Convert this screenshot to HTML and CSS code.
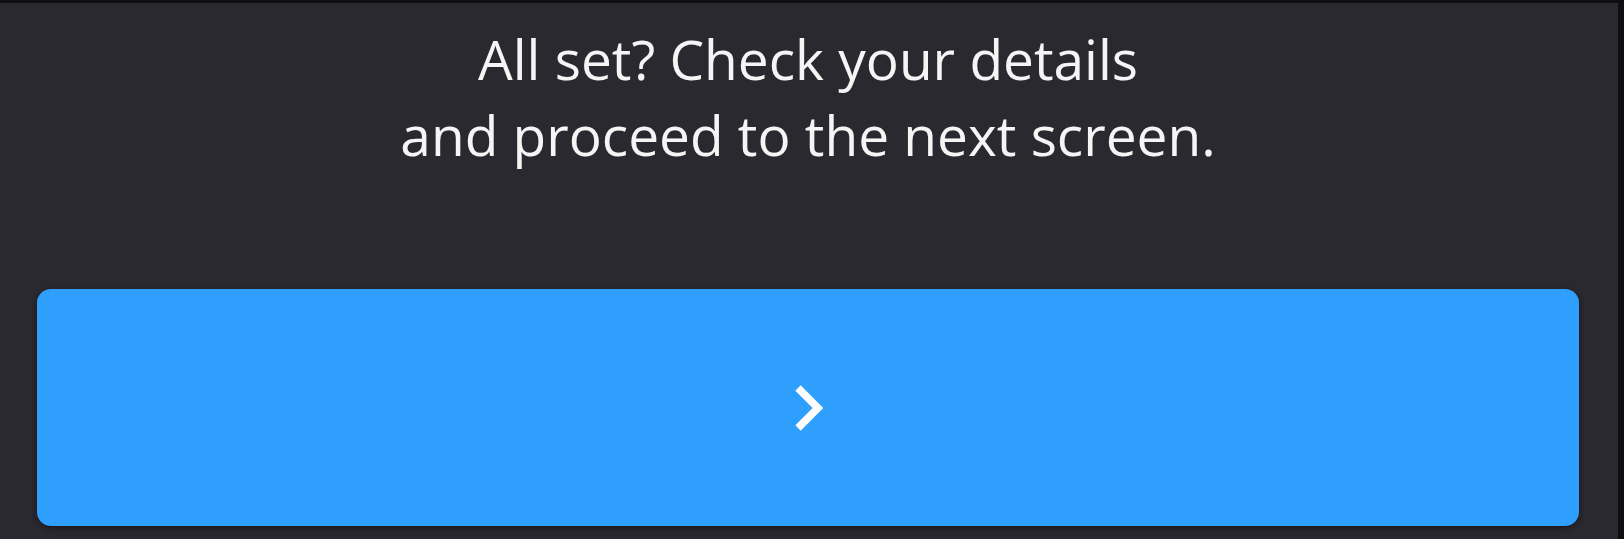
FILE: index.html
```html
<!DOCTYPE html>
<html lang="en">
<head>
    <meta charset="UTF-8">
    <meta name="viewport" content="width=device-width, initial-scale=1.0">
    <title>Confirm details</title>
    <link rel="stylesheet" href="styles.css">
</head>
<body>
    <div class="screen">
        <p class="screen-message">All set? Check your details<br>and proceed to the next screen.</p>

        <button type="button" class="next-button" aria-label="Next">
            <svg class="next-icon" width="32" height="50" viewBox="0 0 32 50">
                <polyline points="6,5 26,25 6,45" fill="none" stroke="#ffffff" stroke-width="7.5"/>
            </svg>
        </button>
    </div>
</body>
</html>
```

FILE: styles.css
```css
body {
    margin: 0;
    padding: 0;
    background: #0e0e10;
    font-family: "Open Sans", "Noto Sans", sans-serif;
}

.screen {
    margin: 3px 6px 0 0;
    height: 536px;
    background: #2a2930;
    padding: 18px 39px 0 37px;
    box-sizing: border-box;
}

.screen-message {
    margin: 0;
    color: #f5f5f5;
    font-size: 55px;
    line-height: 76px;
    text-align: center;
}

.next-button {
    display: flex;
    align-items: center;
    justify-content: center;
    width: 100%;
    height: 237px;
    margin-top: 116px;
    padding: 0;
    border: none;
    border-radius: 14px;
    background: #2f9ffe;
    box-shadow: 0 2px 6px rgba(0, 0, 0, 0.45);
    cursor: pointer;
}

.next-icon {
    display: block;
}
```
